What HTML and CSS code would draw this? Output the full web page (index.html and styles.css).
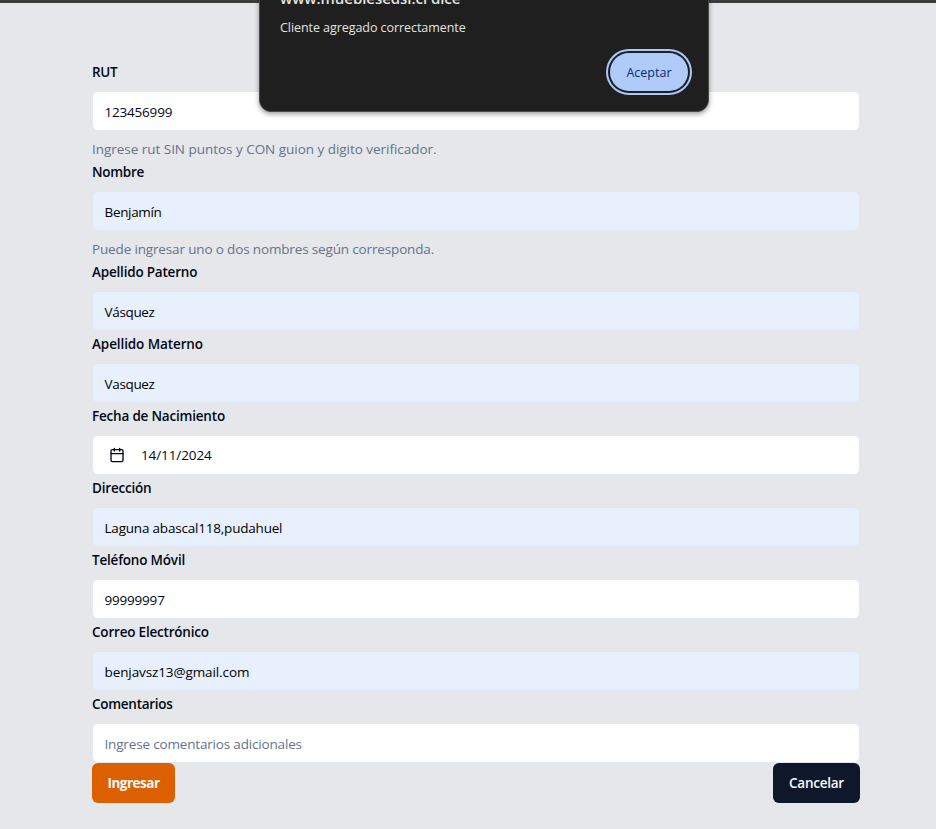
FILE: index.html
```html
<!DOCTYPE html>
<html lang="es">
<head>
<meta charset="utf-8">
<title>Agregar cliente</title>
<link rel="stylesheet" href="styles.css">
</head>
<body>
<form class="form">
  <div class="field"><label class="label l-rut">RUT</label><div class="input"><span class="v-rut">123456999</span></div><p class="hint h-rut">Ingrese rut SIN puntos y CON guion y digito verificador.</p></div>
  <div class="field"><label class="label l-nombre">Nombre</label><div class="input filled"><span class="v-nombre">Benjamín</span></div><p class="hint h-nombre">Puede ingresar uno o dos nombres según corresponda.</p></div>
  <div class="field"><label class="label l-paterno">Apellido Paterno</label><div class="input filled"><span class="v-paterno">Vásquez</span></div></div>
  <div class="field"><label class="label l-materno">Apellido Materno</label><div class="input filled"><span class="v-materno">Vasquez</span></div></div>
  <div class="field"><label class="label l-fecha">Fecha de Nacimiento</label><div class="input date">
    <svg class="calendar" viewBox="0 0 24 24" fill="none" stroke="currentColor" stroke-width="2" stroke-linecap="round" stroke-linejoin="round"><path d="M8 2v4M16 2v4M3 10h18"/><rect x="3" y="4" width="18" height="18" rx="2"/></svg>
    <span class="v-fecha">14/11/2024</span></div></div>
  <div class="field"><label class="label l-direccion">Dirección</label><div class="input filled"><span class="v-direccion">Laguna abascal118,pudahuel</span></div></div>
  <div class="field"><label class="label l-telefono">Teléfono Móvil</label><div class="input"><span class="v-telefono">99999997</span></div></div>
  <div class="field"><label class="label l-correo">Correo Electrónico</label><div class="input filled"><span class="v-correo">benjavsz13@gmail.com</span></div></div>
  <div class="field"><label class="label l-comentarios">Comentarios</label><div class="input placeholder"><span class="v-comentarios">Ingrese comentarios adicionales</span></div></div>
  <div class="actions"><button type="button" class="button primary">Ingresar</button><button type="button" class="button secondary">Cancelar</button></div>
</form>
<div class="dialog" role="alertdialog">
  <div class="dialog-title">www.mueblesedsi.cl dice</div>
  <div class="dialog-text">Cliente agregado correctamente</div>
  <button type="button" class="accept">Aceptar</button>
</div>
</body>
</html>
```
FILE: styles.css
```css
* { box-sizing: border-box; }
body {
  margin: 0;
  height: 829px;
  overflow: hidden;
  border-top: 3px solid #3c3c3c;
  background: #e5e7eb;
  color: #020817;
  font: 14px/20px "Open Sans", "Noto Sans", sans-serif;
}
.form { width: 768px; margin: 56px 0 0 92px; }
.label { display: block; height: 24px; line-height: 26px; font-weight: 600; font-size: 13.5px; letter-spacing: -0.2px; white-space: nowrap; }
.input {
  display: flex;
  align-items: center;
  height: 40px;
  margin-top: 8px;
  padding: 2px 11.5px 0;
  border: 1px solid #e2e8f0;
  border-radius: 6px;
  background: #fff;
  font-size: 13.5px;
  letter-spacing: -0.2px;
  white-space: nowrap;
}
.filled { background: #e8f0fe; color: #000; }
.date { padding: 0 16px; }
.calendar { width: 16px; height: 16px; margin-right: 16px; }
.placeholder, .hint { color: #64748b; }
.hint { margin: 8px 0 0; font-size: 13.5px; white-space: nowrap; }
.l-rut, .l-nombre, .l-comentarios { letter-spacing: -0.28px; }
.l-materno { letter-spacing: -0.1px; }
.v-nombre, .v-paterno, .v-materno { letter-spacing: -0.33px; }
.v-fecha, .v-correo { letter-spacing: -0.1px; }
.v-comentarios { letter-spacing: -0.17px; }
.h-rut { letter-spacing: -0.03px; }
.h-nombre { letter-spacing: -0.15px; }
.actions { display: flex; justify-content: space-between; }
.button { height: 40px; padding: 0; border: 0; border-radius: 6px; color: #f8fafc; font: 600 13.5px/20px "Open Sans", sans-serif; }
.primary { width: 83px; background: #dc6000; font-weight: 700; letter-spacing: -0.5px; }
.secondary { width: 87px; background: #0f172a; letter-spacing: -0.25px; }
.dialog {
  position: absolute;
  top: -12px;
  left: 259px;
  width: 450px;
  height: 124px;
  padding: 0 20px;
  border: 1px solid #4b4b4b;
  border-radius: 12px;
  background: #1f1f1f;
  color: #e3e3e3;
  box-shadow: 0 2px 5px rgba(0, 0, 0, .4);
}
.dialog-title { margin-top: -1px; font-weight: 600; font-size: 15px; line-height: 20px; letter-spacing: -0.05px; }
.dialog-text { margin-top: 10px; font-size: 12.5px; line-height: 20px; letter-spacing: -0.06px; }
.accept {
  display: block;
  width: 78px;
  height: 38px;
  margin: 15px -1px 0 auto;
  margin-right: 0;
  padding: 1px 0 0;
  border: 0;
  border-radius: 19px;
  background: #afcbfa;
  color: #062e6f;
  outline: 2px solid #a8c7fa;
  outline-offset: 2px;
  font: 500 12.5px/20px "Open Sans", sans-serif;
}
```
